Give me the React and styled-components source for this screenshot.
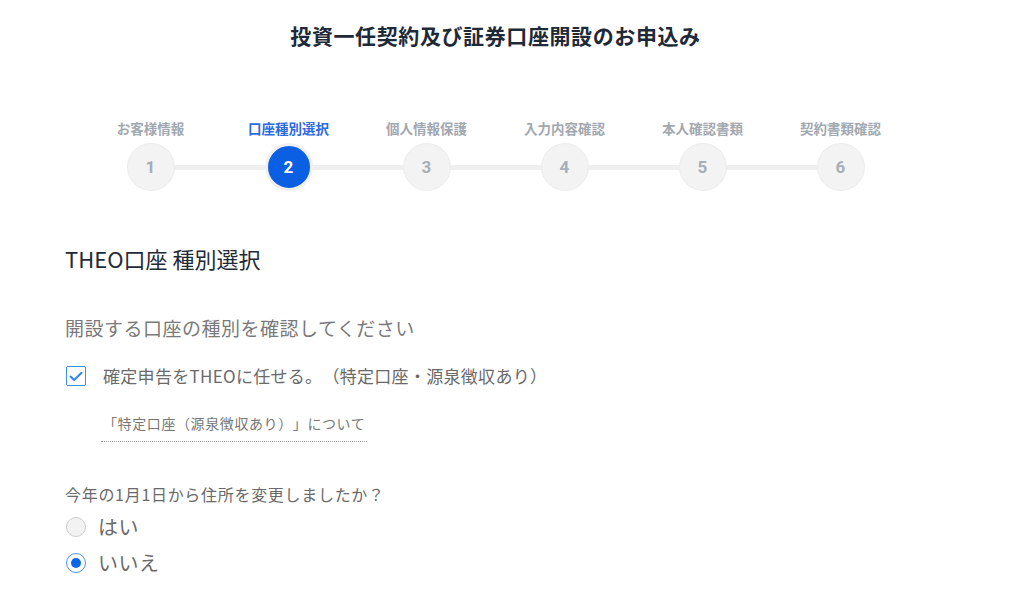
import React from "react";
import styled, { createGlobalStyle } from "styled-components";

const Global = createGlobalStyle`
  html, body { margin: 0; padding: 0; background: #ffffff; }
  body {
    font-family: "Noto Sans CJK JP", "Noto Sans", "Liberation Sans", sans-serif;
    color: #666666;
    text-spacing-trim: space-all;
  }
  * { box-sizing: border-box; }
`;

const Page = styled.div`
  width: 1024px;
  min-height: 611px;
  padding: 20px 98px 0 65px;
`;

const Title = styled.h1`
  margin: 0;
  text-align: center;
  font-size: 21px;
  line-height: 30px;
  font-weight: 700;
  color: #1e2a38;
  letter-spacing: 0.6px;
`;

const Stepper = styled.ol`
  position: relative;
  list-style: none;
  margin: 70px auto 0;
  padding: 0;
  width: 828px;
  display: flex;
  &::before {
    content: "";
    position: absolute;
    left: 69px;
    right: 69px;
    top: 45px;
    height: 5px;
    background: #efefef;
  }
`;

const Step = styled.li`
  position: relative;
  width: 138px;
  display: flex;
  flex-direction: column;
  align-items: center;
  gap: 7px;
`;

const StepLabel = styled.span`
  font-size: 13.5px;
  line-height: 16px;
  font-weight: 700;
  color: ${(p) => (p.$active ? "#2c6be0" : "#a2a8b0")};
  white-space: nowrap;
`;

const StepCircle = styled.span`
  width: 48px;
  height: 48px;
  border-radius: 50%;
  display: flex;
  align-items: center;
  justify-content: center;
  font-family: "Roboto", "Liberation Sans", sans-serif;
  font-size: 17px;
  font-weight: 700;
  color: ${(p) => (p.$active ? "#ffffff" : "#a7aeb8")};
  background: ${(p) => (p.$active ? "#0b5fe3" : "#f3f3f3")};
  border: ${(p) => (p.$active ? "3px solid #f0f0f0" : "1px solid #ededed")};
`;

const Section = styled.section`
  margin-top: 52px;
  display: flex;
  flex-direction: column;
  align-items: flex-start;
`;

const Heading = styled.h2`
  margin: 0;
  font-size: 22px;
  line-height: 30px;
  font-weight: 400;
  color: #1f2b37;
`;

const Lead = styled.p`
  margin: 41px 0 0;
  font-size: 19px;
  line-height: 28px;
  color: #7a7a7a;
  letter-spacing: 0.5px;
`;

const CheckRow = styled.label`
  margin-top: 22px;
  display: flex;
  align-items: center;
  gap: 17px;
  padding-left: 1px;
  font-size: 17px;
  line-height: 24px;
  color: #6a6a6a;
  letter-spacing: 0.3px;
`;

const CheckBox = styled.span`
  width: 20px;
  height: 20px;
  border: 1px solid #3d8ff2;
  border-radius: 2px;
  background: #ffffff;
  display: flex;
  align-items: center;
  justify-content: center;
`;

const InfoLink = styled.a`
  margin: 25px 0 0 36px;
  padding: 0 2px 8px;
  font-size: 14px;
  line-height: 20px;
  color: #777777;
  text-decoration: none;
  letter-spacing: 0.6px;
  border-bottom: 1px dotted #9a9a9a;
`;

const Question = styled.p`
  margin: 40px 0 0;
  font-size: 16px;
  line-height: 24px;
  color: #6a6a6a;
  letter-spacing: 0.7px;
`;

const RadioGroup = styled.div`
  margin-top: 7px;
  display: flex;
  flex-direction: column;
  gap: 8px;
`;

const RadioRow = styled.label`
  display: flex;
  align-items: center;
  gap: 12px;
  height: 28px;
  padding-left: 1px;
  font-size: 20px;
  line-height: 28px;
  color: #6a6a6a;
  letter-spacing: 0.5px;
`;

const RadioDot = styled.span`
  width: 20px;
  height: 20px;
  border-radius: 50%;
  display: flex;
  align-items: center;
  justify-content: center;
  background: ${(p) => (p.$checked ? "#ffffff" : "#f2f2f2")};
  border: 1px solid ${(p) => (p.$checked ? "#4a93f0" : "#cfcfcf")};
  &::after {
    content: "";
    display: ${(p) => (p.$checked ? "block" : "none")};
    width: 10px;
    height: 10px;
    border-radius: 50%;
    background: #0a66e8;
  }
`;

const steps = ["お客様情報", "口座種別選択", "個人情報保護", "入力内容確認", "本人確認書類", "契約書類確認"];

export default function App() {
  return (
    <Page>
      <Global />
      <Title>投資一任契約及び証券口座開設のお申込み</Title>
      <Stepper>
        {steps.map((s, i) => (
          <Step key={s}>
            <StepLabel $active={i === 1}>{s}</StepLabel>
            <StepCircle $active={i === 1}>{i + 1}</StepCircle>
          </Step>
        ))}
      </Stepper>
      <Section>
        <Heading>THEO口座 種別選択</Heading>
        <Lead>開設する口座の種別を確認してください</Lead>
        <CheckRow>
          <CheckBox>
            <svg width="14" height="11" viewBox="0 0 14 11" fill="none">
              <path d="M1.5 5.5 L5.2 9 L12.5 1.8" stroke="#2f84ee" strokeWidth="2" strokeLinecap="round" strokeLinejoin="round" />
            </svg>
          </CheckBox>
          確定申告をTHEOに任せる。（特定口座・源泉徴収あり）
        </CheckRow>
        <InfoLink href="#">「特定口座（源泉徴収あり）」について</InfoLink>
        <Question>今年の1月1日から住所を変更しましたか？</Question>
        <RadioGroup>
          <RadioRow>
            <RadioDot />
            はい
          </RadioRow>
          <RadioRow>
            <RadioDot $checked />
            いいえ
          </RadioRow>
        </RadioGroup>
      </Section>
    </Page>
  );
}
